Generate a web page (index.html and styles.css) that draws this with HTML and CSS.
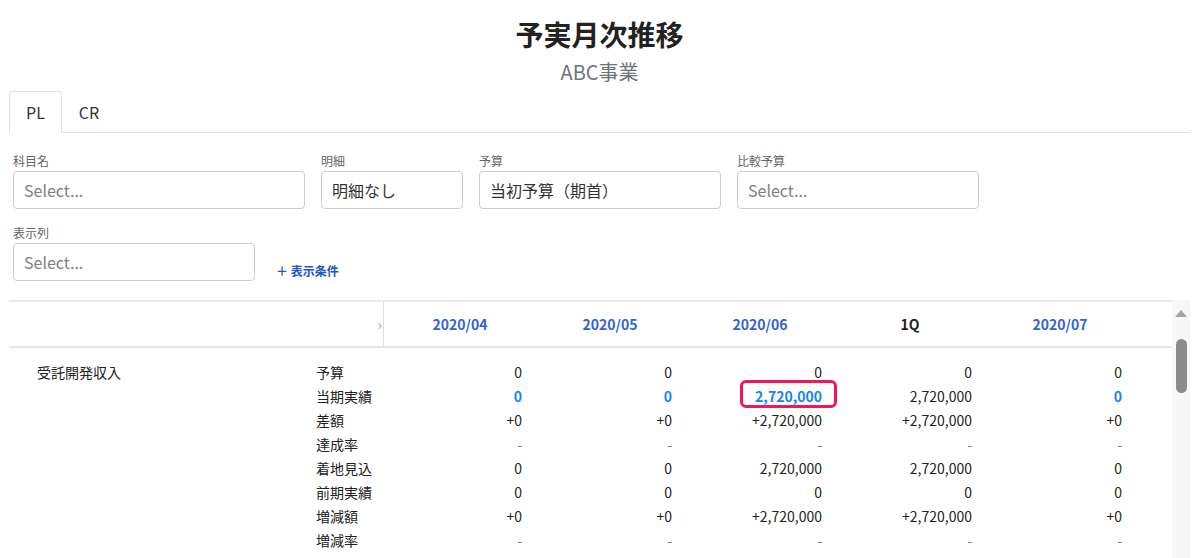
FILE: index.html
```html
<!DOCTYPE html>
<html lang="ja">
<head>
    <meta charset="UTF-8">
    <meta name="viewport" content="width=device-width, initial-scale=1.0">
    <title>予実月次推移</title>
    <link rel="stylesheet" href="styles.css">
</head>
<body>
    <div class="page">
        <div class="heading">
            <h1>予実月次推移</h1>
            <p class="subtitle">ABC事業</p>
        </div>

        <div class="tabs">
            <div class="tab active">PL</div>
            <div class="tab">CR</div>
        </div>

        <div class="filters">
            <div class="filter-row">
                <div class="field w-wide">
                    <label>科目名</label>
                    <div class="select placeholder">Select...</div>
                </div>
                <div class="field w-small">
                    <label>明細</label>
                    <div class="select">明細なし</div>
                </div>
                <div class="field w-mid">
                    <label>予算</label>
                    <div class="select">当初予算（期首）</div>
                </div>
                <div class="field w-mid">
                    <label>比較予算</label>
                    <div class="select placeholder">Select...</div>
                </div>
            </div>
            <div class="filter-row">
                <div class="field w-mid">
                    <label>表示列</label>
                    <div class="select placeholder">Select...</div>
                </div>
                <a class="add-condition">＋ 表示条件</a>
            </div>
        </div>

        <div class="table-wrap">
            <div class="table">
                <div class="thead">
                    <div class="th-left"><span class="chevron">›</span></div>
                    <div class="th month">2020/04</div>
                    <div class="th month">2020/05</div>
                    <div class="th month">2020/06</div>
                    <div class="th quarter">1Q</div>
                    <div class="th month">2020/07</div>
                </div>
                <div class="tbody">
                    <div class="row">
                        <div class="name">受託開発収入</div>
                        <div class="label">予算</div>
                        <div class="val">0</div><div class="val">0</div><div class="val">0</div><div class="val">0</div><div class="val">0</div>
                    </div>
                    <div class="row">
                        <div class="name"></div>
                        <div class="label">当期実績</div>
                        <div class="val link">0</div><div class="val link">0</div>
                        <div class="val link"><span class="marked">2,720,000</span></div>
                        <div class="val">2,720,000</div><div class="val link">0</div>
                    </div>
                    <div class="row">
                        <div class="name"></div>
                        <div class="label">差額</div>
                        <div class="val">+0</div><div class="val">+0</div><div class="val">+2,720,000</div><div class="val">+2,720,000</div><div class="val">+0</div>
                    </div>
                    <div class="row">
                        <div class="name"></div>
                        <div class="label">達成率</div>
                        <div class="val dash">-</div><div class="val dash">-</div><div class="val dash">-</div><div class="val dash">-</div><div class="val dash">-</div>
                    </div>
                    <div class="row">
                        <div class="name"></div>
                        <div class="label">着地見込</div>
                        <div class="val">0</div><div class="val">0</div><div class="val">2,720,000</div><div class="val">2,720,000</div><div class="val">0</div>
                    </div>
                    <div class="row">
                        <div class="name"></div>
                        <div class="label">前期実績</div>
                        <div class="val">0</div><div class="val">0</div><div class="val">0</div><div class="val">0</div><div class="val">0</div>
                    </div>
                    <div class="row">
                        <div class="name"></div>
                        <div class="label">増減額</div>
                        <div class="val">+0</div><div class="val">+0</div><div class="val">+2,720,000</div><div class="val">+2,720,000</div><div class="val">+0</div>
                    </div>
                    <div class="row">
                        <div class="name"></div>
                        <div class="label">増減率</div>
                        <div class="val dash">-</div><div class="val dash">-</div><div class="val dash">-</div><div class="val dash">-</div><div class="val dash">-</div>
                    </div>
                </div>
            </div>
            <div class="scrollbar">
                <div class="arrow-up"></div>
                <div class="thumb"></div>
            </div>
        </div>
    </div>
</body>
</html>
```

FILE: styles.css
```css
body {
    margin: 0;
    font-family: "Noto Sans CJK JP", "Noto Sans", sans-serif;
    color: #212529;
    background-color: white;
    overflow: hidden;
}
.page {
    padding: 0 10px 0 9px;
}
.heading {
    text-align: center;
    padding-top: 14px;
    height: 77px;
}
h1 {
    margin: 0;
    font-size: 28px;
    line-height: 40px;
    font-weight: bold;
    color: #222;
}
.subtitle {
    margin: 0;
    font-size: 20px;
    line-height: 36px;
    color: #6c757d;
}
.tabs {
    display: flex;
    border-bottom: 1px solid #dee2e6;
    height: 41px;
}
.tab {
    padding: 0 16px;
    line-height: 41px;
    font-size: 16px;
    color: #333;
    border: 1px solid transparent;
    border-bottom: none;
    border-radius: 4px 4px 0 0;
    margin-bottom: -1px;
    height: 41px;
    box-sizing: border-box;
}
.tab.active {
    border-color: #dee2e6;
    background-color: white;
    height: 42px;
}
.filters {
    padding: 20px 0 0 4px;
}
.filter-row {
    display: flex;
    align-items: flex-end;
    gap: 16px;
    margin-bottom: 16px;
}
.field label {
    display: block;
    font-size: 12px;
    line-height: 16px;
    color: #666;
    margin-bottom: 2px;
}
.select {
    height: 38px;
    box-sizing: border-box;
    border: 1px solid #ccc;
    border-radius: 4px;
    padding: 0 10px;
    font-size: 16px;
    line-height: 36px;
    color: #333;
}
.select.placeholder {
    color: #808080;
}
.w-wide {
    width: 292px;
}
.w-small {
    width: 142px;
}
.w-mid {
    width: 242px;
}
.add-condition {
    font-size: 12px;
    font-weight: bold;
    color: #2355c4;
    margin-left: 5px;
    line-height: 16px;
    margin-bottom: 2px;
}
.table-wrap {
    display: flex;
    margin-top: 19px;
}
.table {
    width: 1163px;
    border-top: 2px solid #eaeaea;
}
.thead,
.row {
    display: grid;
    grid-template-columns: 307px 68px repeat(5, 150px) 1fr;
}
.thead {
    height: 44px;
    border-bottom: 2px solid #e6e6e6;
    font-size: 14px;
    font-weight: bold;
}
.th-left {
    grid-column: span 2;
    border-right: 1px solid #ddd;
    text-align: right;
    padding-right: 1px;
}
.chevron {
    color: #999;
    font-size: 14px;
    font-weight: normal;
    line-height: 44px;
}
.th {
    text-align: center;
    line-height: 44px;
    padding-left: 2px;
}
.th.month {
    color: #3462cf;
}
.th.quarter {
    color: #222;
}
.tbody {
    padding-top: 12px;
    font-size: 14px;
    color: #222;
}
.row {
    height: 24px;
    line-height: 24px;
}
.name {
    padding-left: 28px;
}
.val {
    text-align: right;
    padding-right: 12px;
}
.val.link {
    color: #1184fc;
    font-weight: bold;
}
.val.dash {
    color: #777;
}
.marked {
    position: relative;
    display: inline-block;
}
.marked::after {
    content: "";
    position: absolute;
    left: -15px;
    right: -15px;
    top: -4px;
    bottom: 0;
    border: 3px solid #f0185c;
    border-radius: 6px;
}
.scrollbar {
    width: 18px;
    background-color: #f7f7f7;
    height: 260px;
    display: flex;
    flex-direction: column;
    align-items: center;
}
.arrow-up {
    width: 0;
    height: 0;
    margin-top: 10px;
    border-left: 6px solid transparent;
    border-right: 6px solid transparent;
    border-bottom: 7px solid #a3a3a3;
}
.thumb {
    margin-top: 22px;
    width: 11px;
    height: 54px;
    border-radius: 6px;
    background-color: #8c8c8c;
}
```
